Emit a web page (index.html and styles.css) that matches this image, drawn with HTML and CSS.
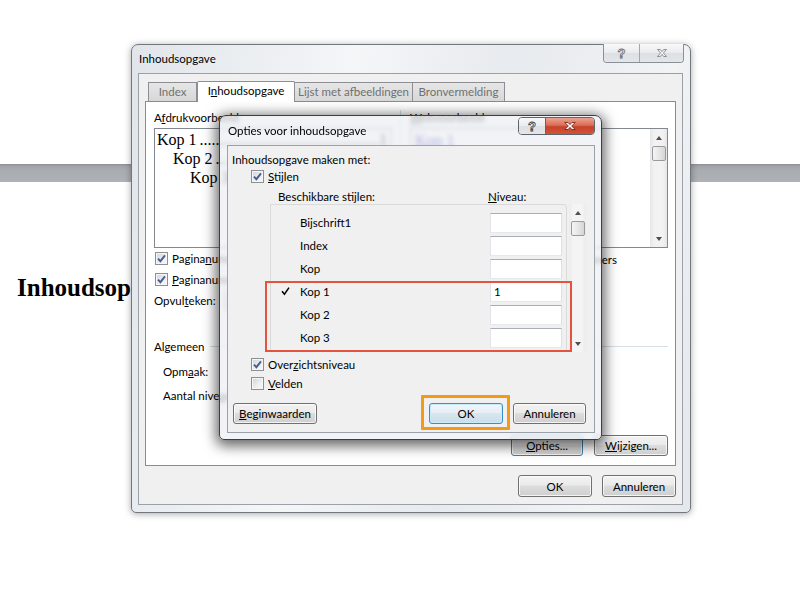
FILE: index.html
```html
<!DOCTYPE html>
<html lang="nl">
<head>
    <meta charset="UTF-8">
    <title>Inhoudsopgave</title>
    <link rel="stylesheet" href="styles.css">
</head>
<body>
    <!-- document achter de vensters -->
    <div class="doc">
        <div class="doc-rule"></div>
        <h1 class="doc-title">Inhoudsopgave</h1>
    </div>

    <!-- dialoog: Inhoudsopgave -->
    <div class="window window-main">
        <div class="titlebar">
            <span class="caption">Inhoudsopgave</span>
            <div class="cap-btns">
                <span class="cap-btn cap-help">?</span>
                <span class="cap-btn cap-close">
                    <svg width="12" height="10" viewBox="0 0 12 10"><path d="M1.5 1.5H4.3L6 3.6L7.7 1.5H10.5L7.4 5L10.5 8.5H7.7L6 6.4L4.3 8.5H1.5L4.6 5Z"/></svg>
                </span>
            </div>
        </div>
        <div class="client">
            <div class="tabs">
                <div class="tab tab-index">Index</div>
                <div class="tab tab-toc active">I<u>n</u>houdsopgave</div>
                <div class="tab tab-figures">Lijst met afbeeldingen</div>
                <div class="tab tab-sources">Bronvermelding</div>
            </div>
            <div class="tab-panel">
                <div class="preview-row">
                    <div class="col col-print">
                        <div class="label">A<u>f</u>drukvoorbeeld</div>
                        <div class="preview-box">
                            <div class="toc-line lvl1"><span>Kop 1</span><span class="leader">........................................................................</span><span>1</span></div>
                            <div class="toc-line lvl2"><span>Kop 2</span><span class="leader">........................................................................</span><span>3</span></div>
                            <div class="toc-line lvl3"><span>Kop 3</span><span class="leader">........................................................................</span><span>5</span></div>
                        </div>
                        <div class="check-row">
                            <span class="checkbox"><svg width="9" height="9" viewBox="0 0 9 9"><path d="M1 4.6L3.4 7.2L8 1.4"/></svg></span>
                            <span>Pagina<u>n</u>ummers weergeven</span>
                        </div>
                        <div class="check-row">
                            <span class="checkbox"><svg width="9" height="9" viewBox="0 0 9 9"><path d="M1 4.6L3.4 7.2L8 1.4"/></svg></span>
                            <span><u>P</u>aginanummers rechts uitlijnen</span>
                        </div>
                        <div class="field-row">
                            <span class="field-label">Opvul<u>t</u>eken:</span>
                            <span class="select">.......<span class="select-arrow"></span></span>
                        </div>
                    </div>
                    <div class="col-sep"></div>
                    <div class="col col-web">
                        <div class="label"><u>W</u>ebvoorbeeld</div>
                        <div class="preview-box web">
                            <div class="web-links">
                                <a>Kop 1</a>
                                <a class="lvl2">Kop 2</a>
                                <a class="lvl3">Kop 3</a>
                            </div>
                            <div class="scrollbar">
                                <span class="arrow up"></span>
                                <span class="thumb"></span>
                                <span class="arrow down"></span>
                            </div>
                        </div>
                        <div class="check-row links-row">
                            <span class="checkbox"><svg width="9" height="9" viewBox="0 0 9 9"><path d="M1 4.6L3.4 7.2L8 1.4"/></svg></span>
                            <span><u>H</u>yperlinks in plaats van paginanummers</span>
                        </div>
                    </div>
                </div>

                <div class="group-head">Algemeen</div>
                <div class="field-row indent">
                    <span class="field-label wide">Opm<u>a</u>ak:</span>
                    <span class="select">Van sjabloon<span class="select-arrow"></span></span>
                </div>
                <div class="field-row indent">
                    <span class="field-label wide">Aantal nive<u>a</u>us:</span>
                    <span class="spin">3</span>
                </div>

                <div class="panel-buttons">
                    <button class="btn btn-options focused"><u>O</u>pties...</button>
                    <button class="btn btn-modify"><u>W</u>ijzigen...</button>
                </div>
            </div>
            <div class="dialog-buttons">
                <button class="btn btn-main">OK</button>
                <button class="btn btn-main">Annuleren</button>
            </div>
        </div>
    </div>

    <!-- dialoog: Opties voor inhoudsopgave -->
    <div class="window window-options">
        <div class="titlebar">
            <span class="caption">Opties voor inhoudsopgave</span>
            <div class="cap-btns">
                <span class="cap-btn cap-help">?</span>
                <span class="cap-btn cap-close">
                    <svg width="14" height="10" viewBox="0 0 12 10" preserveAspectRatio="none"><path d="M1.5 1.5H4.3L6 3.6L7.7 1.5H10.5L7.4 5L10.5 8.5H7.7L6 6.4L4.3 8.5H1.5L4.6 5Z"/></svg>
                </span>
            </div>
        </div>
        <div class="client">
            <div class="opt-heading">Inhoudsopgave maken met:</div>
            <div class="check-row opt-check">
                <span class="checkbox"><svg width="9" height="9" viewBox="0 0 9 9"><path d="M1 4.6L3.4 7.2L8 1.4"/></svg></span>
                <span><u>S</u>tijlen</span>
            </div>
            <div class="list-head">
                <span class="list-head-name">Beschikbare stijlen:</span>
                <span><u>N</u>iveau:</span>
            </div>
            <div class="style-list">
                <div class="list-body">
                    <div class="style-row">
                        <span class="mark"></span>
                        <span class="style-name">Bijschrift1</span>
                        <span class="level"></span>
                    </div>
                    <div class="style-row">
                        <span class="mark"></span>
                        <span class="style-name">Index</span>
                        <span class="level"></span>
                    </div>
                    <div class="style-row">
                        <span class="mark"></span>
                        <span class="style-name">Kop</span>
                        <span class="level"></span>
                    </div>
                    <div class="style-row">
                        <span class="mark"><svg width="9" height="9" viewBox="0 0 9 9"><path d="M0.4 4.8L1.8 3.8L3.3 5.9L7.4 0.2L8.6 1.1L3.5 8.4Z"/></svg></span>
                        <span class="style-name">Kop 1</span>
                        <span class="level">1</span>
                    </div>
                    <div class="style-row">
                        <span class="mark"></span>
                        <span class="style-name">Kop 2</span>
                        <span class="level"></span>
                    </div>
                    <div class="style-row">
                        <span class="mark"></span>
                        <span class="style-name">Kop 3</span>
                        <span class="level"></span>
                    </div>
                </div>
                <div class="scrollbar">
                    <span class="arrow up"></span>
                    <span class="thumb"></span>
                    <span class="arrow down"></span>
                </div>
                <!-- markering rond de kopstijlen -->
                <div class="mark-box"></div>
            </div>
            <div class="check-row opt-check outline-row">
                <span class="checkbox"><svg width="9" height="9" viewBox="0 0 9 9"><path d="M1 4.6L3.4 7.2L8 1.4"/></svg></span>
                <span>Over<u>z</u>ichtsniveau</span>
            </div>
            <div class="check-row opt-check fields-row">
                <span class="checkbox"></span>
                <span><u>V</u>elden</span>
            </div>
            <div class="opt-buttons">
                <button class="btn btn-reset"><u>B</u>eginwaarden</button>
                <button class="btn btn-ok default">OK</button>
                <button class="btn btn-cancel">Annuleren</button>
            </div>
        </div>
    </div>
</body>
</html>
```

FILE: styles.css
```css
/* basis */
* {
    margin: 0;
    padding: 0;
    box-sizing: border-box;
}

body {
    width: 800px;
    height: 600px;
    position: relative;
    overflow: hidden;
    background-color: #ffffff;
    font-family: "Segoe UI", Lato, "Liberation Sans", sans-serif;
    font-size: 11.5px;
    color: #000000;
}

u {
    text-decoration: underline;
    text-underline-offset: 1px;
}

/* document op de achtergrond */
.doc {
    padding-top: 164px;
}

.doc-rule {
    height: 18px;
    background: linear-gradient(#8b8f94 0, #9fa2a7 2px, #a9acb0 6px, #aeb1b5 100%);
}

.doc-title {
    margin-top: 91px;
    padding-left: 17px;
    font-family: "Liberation Serif", "Times New Roman", serif;
    font-size: 25px;
    line-height: 30px;
    font-weight: bold;
}

/* vensters */
.window {
    position: absolute;
    display: flex;
    flex-direction: column;
    border-radius: 7px 7px 5px 5px;
}

.window-main {
    left: 131px;
    top: 44px;
    width: 560px;
    height: 469px;
    border: 1px solid #72777d;
    background: linear-gradient(100deg, #e1e5ea 0%, #f4f6f8 35%, #e7eaee 60%, #f1f3f5 85%, #e4e7eb 100%);
    box-shadow: 0 1px 7px rgba(0, 0, 0, 0.35);
}

.window-options {
    left: 219px;
    top: 115px;
    width: 383px;
    height: 325px;
    border: 1px solid #3b3f44;
    background: rgba(236, 239, 243, 0.72);
    backdrop-filter: blur(2px);
    box-shadow: 0 3px 13px 3px rgba(0, 0, 0, 0.6);
}

.titlebar {
    display: flex;
    align-items: flex-start;
    flex: none;
}

.window-main .titlebar {
    height: 28px;
    padding: 0 6px 0 7px;
}

.window-main .caption {
    margin-top: 6px;
    line-height: 15px;
}

.window-options .titlebar {
    height: 29px;
    padding: 0 6px 0 8px;
}

.window-options .caption {
    margin-top: 7px;
    line-height: 15px;
}

/* knoppen in de titelbalk */
.cap-btns {
    margin-left: auto;
    display: flex;
    border: 1px solid #8a9097;
    border-top: none;
    border-radius: 0 0 4px 4px;
    overflow: hidden;
}

.window-main .cap-btns {
    margin-top: -1px;
    height: 19px;
}

.window-options .cap-btns {
    margin-top: 1px;
    height: 18px;
    border: 1px solid #5d646c;
    border-radius: 4px;
}

.cap-btn {
    display: flex;
    align-items: center;
    justify-content: center;
    background: linear-gradient(#f7f8f9, #e9ebee 50%, #dcdfe3 50%, #e4e6e9);
}

.cap-help {
    font-family: "Liberation Sans", Arial, sans-serif;
    font-weight: bold;
    font-size: 13px;
    color: #f4f4f4;
    -webkit-text-stroke: 0.8px #6a6a6a;
}

.window-main .cap-help {
    width: 36px;
    border-right: 1px solid #a3a8ae;
}

.window-main .cap-close {
    width: 43px;
}

.window-main .cap-close path {
    fill: #f5f5f5;
    stroke: #7a7a7a;
    stroke-width: 0.8;
}

.window-options .cap-help {
    width: 27px;
    border-right: 1px solid #5d646c;
    -webkit-text-stroke: 0.8px #3c3c3c;
}

.window-options .cap-close {
    width: 48px;
    background: linear-gradient(#eba392 0%, #da6e56 45%, #c8412a 55%, #d25438 100%);
}

.window-options .cap-close path {
    fill: #ffffff;
    stroke: #6e2414;
    stroke-width: 0.8;
}

/* clientgebied */
.client {
    flex: 1;
    display: flex;
    flex-direction: column;
    background-color: #f0f0f0;
    border: 1px solid #9aa1a9;
}

.window-main .client {
    margin: 0 7px 7px 6px;
    padding: 7px 6px 7px 6px;
}

.window-options .client {
    margin: 0 6px 6px 7px;
    padding: 6px 8px 8px 4px;
}

/* tabbladen */
.tabs {
    display: flex;
    align-items: flex-end;
    height: 21px;
    padding-left: 3px;
    margin-bottom: -1px;
    position: relative;
    z-index: 1;
}

.tab {
    height: 19px;
    margin-bottom: 1px;
    line-height: 17px;
    text-align: center;
    color: #707070;
    border: 1px solid #8c8e94;
    border-bottom: none;
    border-left: none;
    background: linear-gradient(#e6e6e6, #d7d7d7);
}

.tab-index {
    width: 49px;
    border-left: 1px solid #8c8e94;
}

.tab-toc {
    width: 98px;
}

.tab-figures {
    width: 118px;
}

.tab-sources {
    width: 92px;
}

.tab.active {
    height: 21px;
    margin-bottom: 0;
    line-height: 18px;
    color: #000000;
    background: #ffffff;
    border-left: 1px solid #8c8e94;
    border-radius: 2px 2px 0 0;
}

.tab-panel {
    flex: 1;
    display: flex;
    flex-direction: column;
    background-color: #ffffff;
    border: 1px solid #898c95;
    padding: 8px 7px 9px 8px;
}

/* voorbeelden */
.preview-row {
    display: flex;
}

.col-print {
    width: 238px;
    flex: none;
}

.col-web {
    flex: 1;
    min-width: 0;
}

.col-sep {
    width: 1px;
    flex: none;
    margin: 0 9px 0 8px;
    background-color: #d5dfe5;
}

.label {
    line-height: 15px;
    margin-bottom: 3px;
}

.preview-box {
    height: 120px;
    border: 1px solid #828790;
    background-color: #ffffff;
    overflow: hidden;
}

.toc-line {
    display: flex;
    font-family: "Liberation Serif", "Times New Roman", serif;
    font-size: 16px;
    line-height: 19px;
    white-space: nowrap;
    padding-right: 4px;
}

.toc-line:first-child {
    margin-top: 1px;
}

.toc-line .leader {
    flex: 1;
    overflow: hidden;
    padding-left: 3px;
}

.lvl1 {
    padding-left: 2px;
}

.lvl2 {
    padding-left: 18px;
}

.lvl3 {
    padding-left: 35px;
}

.preview-box.web {
    display: flex;
}

.web-links {
    flex: 1;
    display: flex;
    flex-direction: column;
    align-items: flex-start;
    padding: 2px 0 0 4px;
}

.web-links a {
    font-family: "Liberation Serif", "Times New Roman", serif;
    font-size: 16px;
    line-height: 20px;
    color: #1f1fb8;
    text-decoration: underline;
}

.web-links a.lvl2 {
    padding-left: 16px;
}

.web-links a.lvl3 {
    padding-left: 32px;
}

/* schuifbalk */
.scrollbar {
    width: 17px;
    flex: none;
    display: flex;
    flex-direction: column;
    align-items: center;
    background: linear-gradient(to right, #e6e6e6, #f2f2f2 25%, #f2f2f2 75%, #e6e6e6);
}

.arrow {
    width: 0;
    height: 0;
    border-left: 3.5px solid transparent;
    border-right: 3.5px solid transparent;
}

.arrow.up {
    margin-top: 7px;
    border-bottom: 4px solid #4f4f4f;
}

.arrow.down {
    margin-top: auto;
    margin-bottom: 6px;
    border-top: 4px solid #4f4f4f;
}

.thumb {
    width: 14px;
    height: 15px;
    margin-top: 6px;
    border: 1px solid #979ba0;
    border-radius: 2px;
    background: linear-gradient(to right, #f4f4f4, #e6e6e6 50%, #d6d6d6);
}

/* selectievakjes */
.check-row {
    display: flex;
    align-items: center;
    gap: 4px;
    height: 21px;
    padding-left: 1px;
    white-space: nowrap;
}

.checkbox {
    width: 13px;
    height: 13px;
    flex: none;
    display: flex;
    align-items: center;
    justify-content: center;
    border: 1px solid #8e8f8f;
    background: linear-gradient(135deg, #cfd3d8, #eef0f2 60%, #f8f8f8);
    box-shadow: inset 0 0 0 1px #f6f6f6;
}

.checkbox path {
    fill: none;
    stroke: #485d93;
    stroke-width: 1.9;
}

/* het label van de hyperlinkoptie loopt tot vlak voor de schuifbalk */
.links-row {
    margin-top: 1px;
    justify-content: flex-end;
    padding-right: 51px;
}

/* velden */
.field-row {
    display: flex;
    align-items: center;
    height: 21px;
}

.field-row.indent {
    height: 24px;
    padding-left: 9px;
}

.field-label {
    width: 70px;
}

.field-label.wide {
    width: 100px;
}

.select {
    width: 120px;
    height: 21px;
    display: flex;
    align-items: center;
    padding-left: 4px;
    border: 1px solid #acacac;
    border-radius: 2px;
    background: linear-gradient(#f2f2f2, #e5e5e5);
}

.select-arrow {
    margin-left: auto;
    margin-right: 5px;
    border-left: 3.5px solid transparent;
    border-right: 3.5px solid transparent;
    border-top: 4px solid #333333;
}

.spin {
    width: 50px;
    height: 20px;
    padding-left: 4px;
    line-height: 18px;
    border: 1px solid #abadb3;
    background-color: #ffffff;
}

.group-head {
    display: flex;
    align-items: center;
    margin-top: 28px;
    line-height: 15px;
}

.group-head::after {
    content: "";
    flex: 1;
    height: 1px;
    margin-left: 6px;
    background-color: #d5dfe5;
}

.group-head + .field-row {
    margin-top: 5px;
}

/* knoppen */
.btn {
    font: inherit;
    color: #000000;
    height: 21px;
    border: 1px solid #707070;
    border-radius: 3px;
    background: linear-gradient(#f2f2f2 0%, #ebebeb 45%, #dddddd 50%, #cfcfcf 100%);
    box-shadow: inset 0 0 0 1px rgba(255, 255, 255, 0.75);
}

.btn.focused {
    border-color: #3c7fb1;
}

.btn.default {
    border-color: #3c8ec8;
    background: linear-gradient(#f0f6fa 0%, #e6eff5 45%, #d8e6ef 50%, #cadde9 100%);
    box-shadow: inset 0 0 0 1px #c6ebfc;
}

.panel-buttons {
    margin-top: auto;
    display: flex;
    justify-content: flex-end;
    gap: 11px;
    padding-right: 2px;
    margin-right: -2px;
}

.btn-options {
    width: 72px;
}

.btn-modify {
    width: 74px;
}

.dialog-buttons {
    margin-top: 9px;
    display: flex;
    justify-content: flex-end;
    gap: 10px;
}

.btn-main {
    width: 74px;
    height: 22px;
}

/* optiesvenster */
.opt-heading {
    line-height: 15px;
}

.opt-check {
    height: 16px;
    padding-left: 19px;
    margin-top: 1px;
}

.list-head {
    display: flex;
    line-height: 15px;
    margin-top: 5px;
    padding-left: 46px;
}

.list-head-name {
    width: 210px;
}

.style-list {
    position: relative;
    display: flex;
    height: 148px;
    margin-left: 38px;
}

.list-body {
    width: 299px;
    border: 1px solid #dadada;
    border-radius: 0 3px 3px 0;
    padding-top: 6px;
}

.style-list .scrollbar {
    margin-left: 2px;
    background: linear-gradient(to right, #ebebeb, #f4f4f4 25%, #f4f4f4 75%, #ebebeb);
}

.style-row {
    display: flex;
    align-items: center;
    height: 23px;
}

.style-row .mark {
    width: 29px;
    padding-left: 10px;
    display: flex;
    align-items: center;
}

.style-row .mark path {
    fill: #000000;
}

.style-name {
    width: 190px;
}

.level {
    width: 72px;
    height: 20px;
    padding-left: 3px;
    line-height: 18px;
    border: 1px solid #abadb3;
    border-color: #abadb3 #dbdfe6 #e3e9ef #e2e3ea;
    background-color: #ffffff;
}

.mark-box {
    position: absolute;
    left: -5px;
    top: 77px;
    width: 307px;
    height: 71px;
    border: 2px solid #e4533d;
}

.outline-row {
    margin-top: 4px;
}

.fields-row {
    margin-top: 3px;
}

.opt-buttons {
    margin-top: auto;
    display: flex;
    gap: 10px;
    padding-left: 1px;
}

.btn-reset {
    width: 84px;
    margin-right: auto;
}

.btn-ok {
    width: 74px;
    position: relative;
}

/* oranje markering rond de standaardknop */
.btn-ok::after {
    content: "";
    position: absolute;
    left: -9px;
    top: -9px;
    right: -8px;
    bottom: -7px;
    border: 3px solid #f39a16;
    border-radius: 1px;
}

.btn-cancel {
    width: 73px;
}
```
